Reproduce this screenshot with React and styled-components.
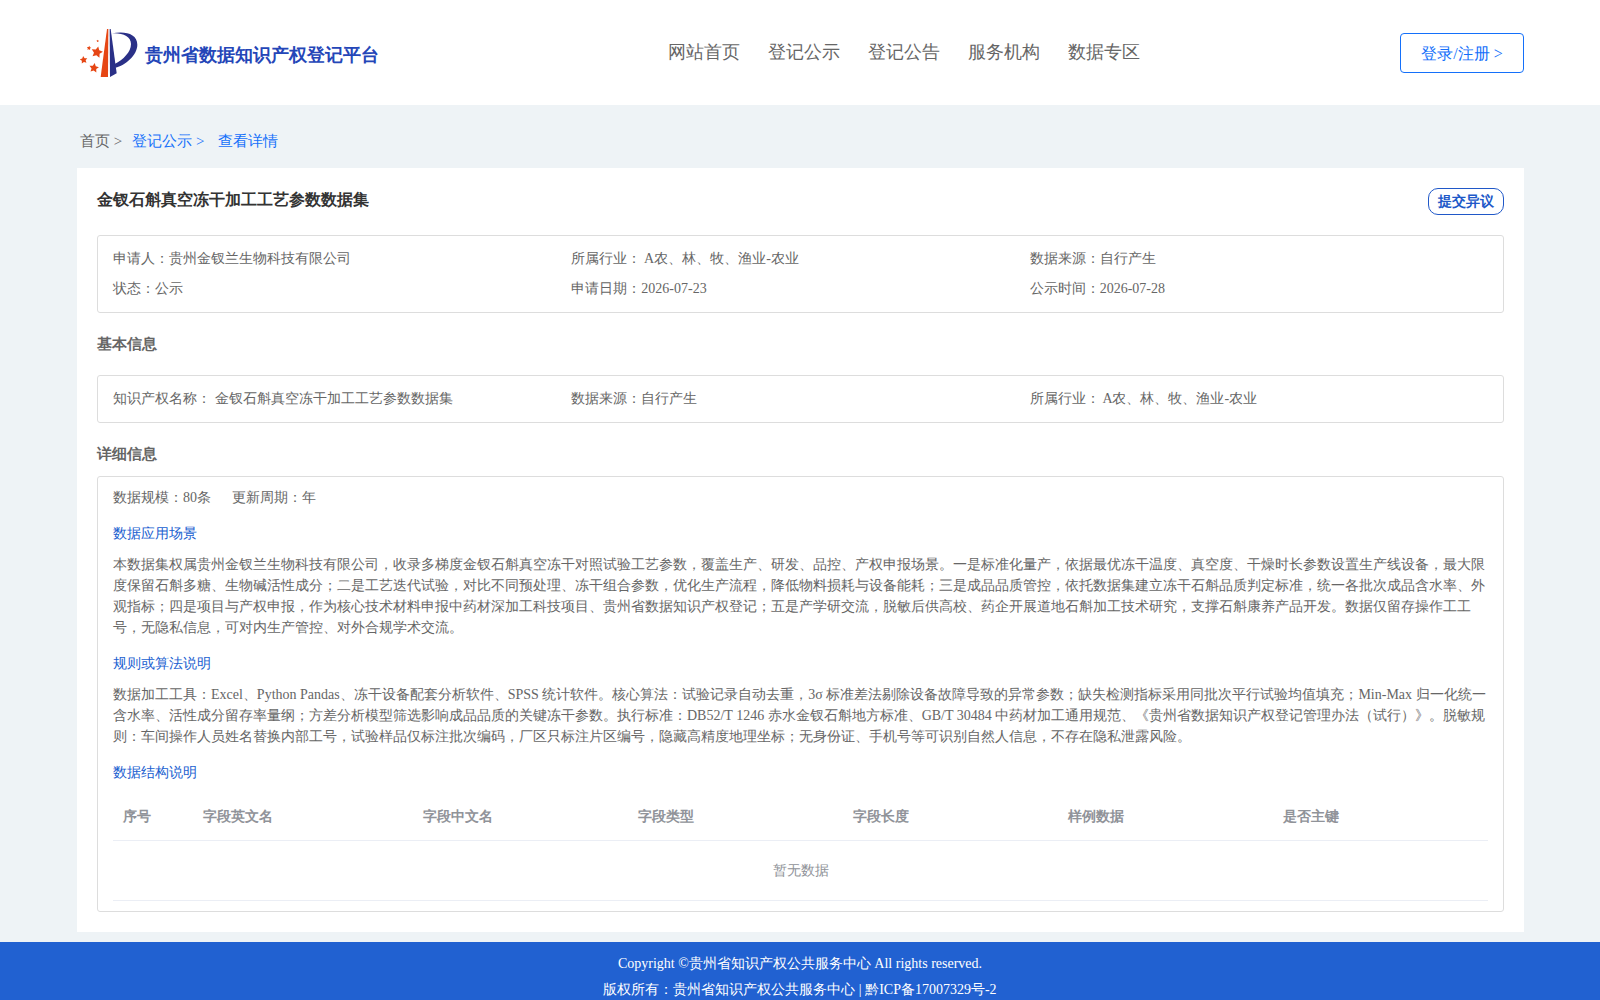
import React from "react";
import styled, { createGlobalStyle } from "styled-components";

const GlobalStyle = createGlobalStyle`
  *, *::before, *::after { box-sizing: border-box; }
  body {
    margin: 0;
    background: #eef3f6;
    color: #666;
    font-family: "Liberation Serif", serif;
    font-size: 14px;
    line-height: 21px;
  }
  h1, h2, h3, p, dl, dd { margin: 0; }
  a { color: inherit; text-decoration: none; }
  button { font-family: inherit; cursor: pointer; }
`;

const Header = styled.header`
  display: flex;
  align-items: center;
  justify-content: space-between;
  height: 105px;
  padding: 0 76px 0 77px;
  background: #fff;
`;

const Brand = styled.a`
  display: flex;
  align-items: center;
  gap: 5px;
  padding-left: 3px;
`;

const BrandName = styled.span`
  padding-top: 4px;
  color: #2446b8;
  font-size: 18px;
  font-weight: bold;
  line-height: 24px;
`;

const Logo = styled.svg`
  width: 60px;
  height: 54px;
`;

const Nav = styled.nav`
  display: flex;
  padding-bottom: 2px;
  font-size: 18px;
  line-height: 24px;
`;

const NavLink = styled.a`
  padding-left: 28px;
`;

const LoginButton = styled.button`
  width: 124px;
  height: 40px;
  padding: 4px 0 0;
  border: 1px solid #1470fa;
  border-radius: 4px;
  background: #fff;
  color: #1470fa;
  font-size: 16px;
`;

const Main = styled.main`
  padding: 0 76px 10px 77px;
`;

const Breadcrumb = styled.nav`
  display: flex;
  gap: 10px;
  padding: 25px 3px 16px;
  font-size: 15px;
  line-height: 22px;
`;

const Crumb = styled.a`
  color: ${(p) => (p.$active ? "#1470fa" : "#666")};
  padding-left: ${(p) => (p.$last ? "4px" : "0")};
`;

const Card = styled.article`
  padding: 20px;
  background: #fff;
`;

const CardHead = styled.div`
  display: flex;
  align-items: flex-start;
  justify-content: space-between;
  height: 47px;
`;

const Title = styled.h1`
  color: #333;
  font-size: 16px;
  line-height: 24px;
`;

const ObjectionButton = styled.button`
  width: 76px;
  height: 27px;
  padding: 0;
  border: 1px solid #2058c8;
  border-radius: 10px;
  background: #fff;
  color: #2058c8;
  font-size: 14px;
  font-weight: bold;
`;

const SectionTitle = styled.h2`
  padding: 20px 0 ${(p) => (p.$tight ? "11px" : "20px")};
  font-size: 15px;
  line-height: 22px;
`;

const Box = styled.section`
  padding: ${(p) => (p.$detail ? "10px 15px" : "8px 15px")};
  border: 1px solid #ddd;
  border-radius: 3px;
`;

const Facts = styled.dl`
  display: grid;
  grid-template-columns: repeat(3, 1fr);
  line-height: 30px;
`;

const Fact = styled.div`
  display: flex;
  white-space: pre;
`;

const Meta = styled.dl`
  display: flex;
  gap: 21px;
`;

const SubTitle = styled.h3`
  margin: 15px 0 10px;
  color: #2060d0;
  font-size: 14px;
  font-weight: normal;
`;

const Table = styled.table`
  width: 100%;
  border-collapse: separate;
  border-spacing: 0;
  table-layout: fixed;
  color: #909399;
`;

const HeadCell = styled.th`
  width: ${(p) => p.$width || "auto"};
  height: 48px;
  padding: 0 10px;
  border-bottom: 1px solid #ebeef5;
  text-align: left;
`;

const EmptyCell = styled.td`
  height: 60px;
  padding: 0;
  border-bottom: 1px solid #ebeef5;
  text-align: center;
`;

const Footer = styled.footer`
  padding-top: 9px;
  background: #2161d1;
  color: #fff;
  line-height: 26px;
  text-align: center;
`;

const navItems = ["网站首页", "登记公示", "登记公告", "服务机构", "数据专区"];

const summary = [
  ["申请人：", "贵州金钗兰生物科技有限公司"],
  ["所属行业：", " A农、林、牧、渔业-农业"],
  ["数据来源：", "自行产生"],
  ["状态：", "公示"],
  ["申请日期：", "2026-07-23"],
  ["公示时间：", "2026-07-28"],
];

const basics = [
  ["知识产权名称：", " 金钗石斛真空冻干加工工艺参数数据集"],
  ["数据来源：", "自行产生"],
  ["所属行业：", " A农、林、牧、渔业-农业"],
];

const columns = [
  { name: "序号", width: "80px" },
  { name: "字段英文名", width: "220px" },
  { name: "字段中文名" },
  { name: "字段类型" },
  { name: "字段长度" },
  { name: "样例数据" },
  { name: "是否主键" },
];

const stars = [
  [41, 120, 12, -8],
  [81, 97, 18, 12],
  [72, 144, 15, 8],
  [57, 84, 7, 10],
  [83, 63, 4, 0],
];

function starPoints([cx, cy, r, tilt]) {
  return Array.from({ length: 10 }, (_, i) => {
    const radius = i % 2 ? r * 0.5 : r;
    const angle = ((i * 36 - 90 + tilt) * Math.PI) / 180;
    return `${(cx + radius * Math.cos(angle)).toFixed(1)},${(cy + radius * Math.sin(angle)).toFixed(1)}`;
  }).join(" ");
}

function FactList({ items }) {
  return (
    <Facts>
      {items.map(([label, value]) => (
        <Fact key={label}>
          <dt>{label}</dt>
          <dd>{value}</dd>
        </Fact>
      ))}
    </Facts>
  );
}

export default function App() {
  return (
    <>
      <GlobalStyle />
      <Header>
        <Brand href="#">
          <Logo viewBox="30 18 180 162" aria-hidden="true">
            <g fill="#e64614">
              {stars.map((s) => (
                <polygon key={s[0]} points={starPoints(s)} />
              ))}
              <path d="M111 27h4l-1 144H92Z" />
            </g>
            <g fill="#2a3087">
              <path d="M119 27h3l18 133-20 11Z" />
              <path d="M126 40C164 32 202 40 202 74C202 105 166 136 136 143L134 132C160 119 183 96 183 72C183 49 158 38 126 40Z" />
            </g>
          </Logo>
          <BrandName>贵州省数据知识产权登记平台</BrandName>
        </Brand>
        <Nav>
          {navItems.map((item) => (
            <NavLink href="#" key={item}>{item}</NavLink>
          ))}
        </Nav>
        <LoginButton type="button">登录/注册 &gt;</LoginButton>
      </Header>

      <Main>
        <Breadcrumb>
          <Crumb href="#">首页 &gt;</Crumb>
          <Crumb href="#" $active>登记公示 &gt;</Crumb>
          <Crumb href="#" $active $last>查看详情</Crumb>
        </Breadcrumb>

        <Card>
          <CardHead>
            <Title>金钗石斛真空冻干加工工艺参数数据集</Title>
            <ObjectionButton type="button">提交异议</ObjectionButton>
          </CardHead>
          <Box>
            <FactList items={summary} />
          </Box>

          <SectionTitle>基本信息</SectionTitle>
          <Box>
            <FactList items={basics} />
          </Box>

          <SectionTitle $tight>详细信息</SectionTitle>
          <Box $detail>
            <Meta>
              <Fact><dt>数据规模：</dt><dd>80条</dd></Fact>
              <Fact><dt>更新周期：</dt><dd>年</dd></Fact>
            </Meta>
            <SubTitle>数据应用场景</SubTitle>
            <p>
              本数据集权属贵州金钗兰生物科技有限公司，收录多梯度金钗石斛真空冻干对照试验工艺参数，覆盖生产、研发、品控、产权申报场景。一是标准化量产，依据最优冻干温度、真空度、干燥时长参数设置生产线设备，最大限度保留石斛多糖、生物碱活性成分；二是工艺迭代试验，对比不同预处理、冻干组合参数，优化生产流程，降低物料损耗与设备能耗；三是成品品质管控，依托数据集建立冻干石斛品质判定标准，统一各批次成品含水率、外观指标；四是项目与产权申报，作为核心技术材料申报中药材深加工科技项目、贵州省数据知识产权登记；五是产学研交流，脱敏后供高校、药企开展道地石斛加工技术研究，支撑石斛康养产品开发。数据仅留存操作工工号，无隐私信息，可对内生产管控、对外合规学术交流。
            </p>
            <SubTitle>规则或算法说明</SubTitle>
            <p>
              数据加工工具：Excel、Python Pandas、冻干设备配套分析软件、SPSS 统计软件。核心算法：试验记录自动去重，3σ 标准差法剔除设备故障导致的异常参数；缺失检测指标采用同批次平行试验均值填充；Min-Max 归一化统一含水率、活性成分留存率量纲；方差分析模型筛选影响成品品质的关键冻干参数。执行标准：DB52/T 1246 赤水金钗石斛地方标准、GB/T 30484 中药材加工通用规范、《贵州省数据知识产权登记管理办法（试行）》。脱敏规则：车间操作人员姓名替换内部工号，试验样品仅标注批次编码，厂区只标注片区编号，隐藏高精度地理坐标；无身份证、手机号等可识别自然人信息，不存在隐私泄露风险。
            </p>
            <SubTitle>数据结构说明</SubTitle>
            <Table>
              <thead>
                <tr>
                  {columns.map((c) => (
                    <HeadCell key={c.name} scope="col" $width={c.width}>{c.name}</HeadCell>
                  ))}
                </tr>
              </thead>
              <tbody>
                <tr>
                  <EmptyCell colSpan={columns.length}>暂无数据</EmptyCell>
                </tr>
              </tbody>
            </Table>
          </Box>
        </Card>
      </Main>

      <Footer>
        <p>Copyright ©贵州省知识产权公共服务中心 All rights reserved.</p>
        <p>版权所有：贵州省知识产权公共服务中心 | 黔ICP备17007329号-2</p>
      </Footer>
    </>
  );
}
